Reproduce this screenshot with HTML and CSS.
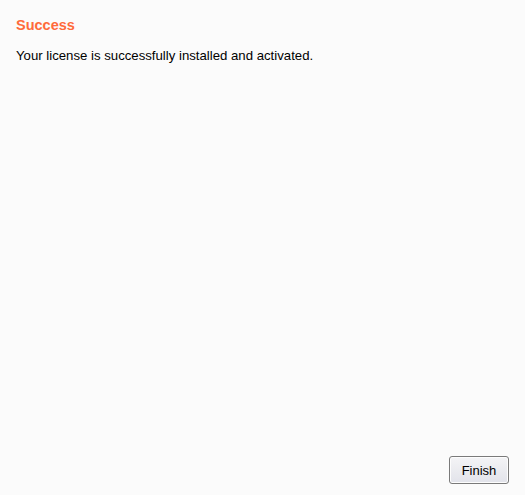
FILE: index.html
```html
<!DOCTYPE html>
<html>
<head>
<meta charset="utf-8">
<link rel="stylesheet" href="styles.css">
</head>
<body>
<div class="page">
  <div class="content">
    <h1 class="title">Success</h1>
    <p class="message">Your license is successfully installed and activated.</p>
  </div>
  <div class="footer">
    <button class="btn">Finish</button>
  </div>
</div>
</body>
</html>
```
FILE: styles.css
```css
html, body {
  margin: 0;
  padding: 0;
  background: #fbfbfb;
  height: 100%;
}
.page {
  height: 495px;
  display: flex;
  flex-direction: column;
  font-family: "Liberation Sans", Arial, sans-serif;
  box-sizing: border-box;
  padding: 16px 16px 11px 16px;
}
.content {
  flex: 1;
}
.title {
  margin: 0;
  font-size: 14.5px;
  font-weight: bold;
  color: #ff6a3a;
  line-height: 18px;
}
.message {
  margin: 14px 0 0 0;
  font-size: 13.2px;
  color: #000;
  line-height: 16px;
}
.footer {
  display: flex;
  justify-content: flex-end;
}
.btn {
  width: 60px;
  height: 28px;
  font-family: "Liberation Sans", Arial, sans-serif;
  font-size: 13px;
  color: #000;
  border: 1px solid #7a7a7a;
  border-radius: 3px;
  background: linear-gradient(#f4f4f6, #e2e3ea);
  box-shadow: inset 0 0 0 1px #fdfdfd;
  padding: 0;
  margin-right: 0;
}
```
